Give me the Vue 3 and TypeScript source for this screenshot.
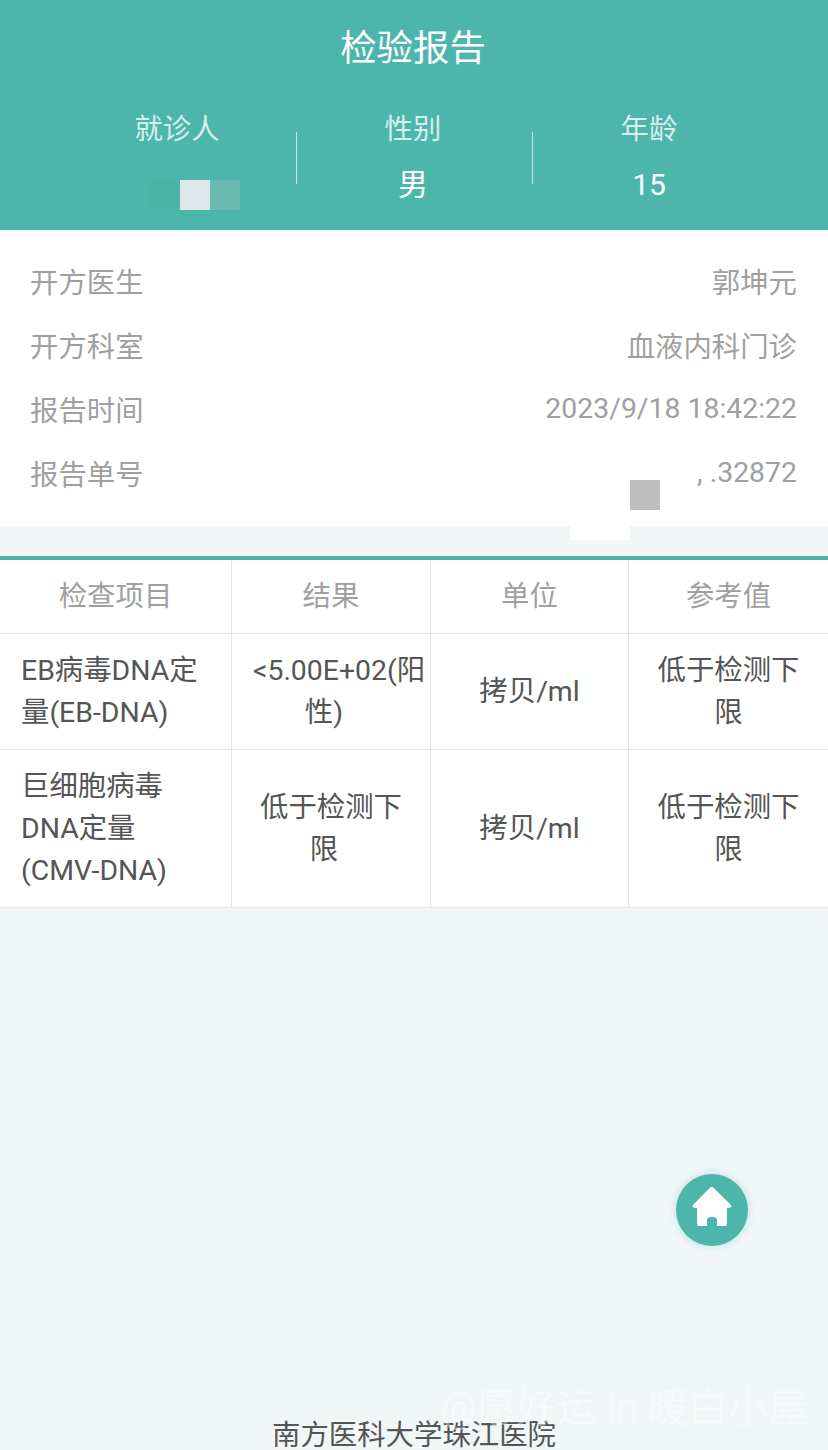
<script setup lang="ts">
interface Line { text: string; cls?: string }
interface Cell { lines: Line[]; cls?: string }
const patient = [
  { label: '就诊人', value: '' },
  { label: '性别', value: '男' },
  { label: '年龄', value: '15' },
]
const info = [
  { label: '开方医生', value: '郭坤元' },
  { label: '开方科室', value: '血液内科门诊' },
  { label: '报告时间', value: '2023/9/18 18:42:22' },
  { label: '报告单号', value: ', .32872' },
]
const heads = ['检查项目', '结果', '单位', '参考值']
const limit: Cell = { lines: [{ text: '低于检测下' }, { text: '限' }] }
const rows: Cell[][] = [
  [
    { cls: 'name', lines: [{ text: 'EB病毒DNA定' }, { text: '量(EB-DNA)' }] },
    { lines: [{ text: '<5.00E+02(阳', cls: 'start' }, { text: '性)', cls: 'shift' }] },
    { lines: [{ text: '拷贝/ml' }] },
    limit,
  ],
  [
    { cls: 'name', lines: [{ text: '巨细胞病毒' }, { text: 'DNA定量' }, { text: '(CMV-DNA)' }] },
    { lines: [{ text: '低于检测下' }, { text: '限', cls: 'shift' }] },
    { lines: [{ text: '拷贝/ml' }] },
    limit,
  ],
]
</script>

<template>
  <div class="page">
    <header class="hero">
      <h1 class="title">检验报告</h1>
      <div class="patient">
        <div v-for="p in patient" :key="p.label" class="pcol">
          <div class="plabel">{{ p.label }}</div>
          <div class="pvalue">{{ p.value || '\u00a0' }}</div>
        </div>
      </div>
    </header>

    <section class="info">
      <div v-for="r in info" :key="r.label" class="irow">
        <span>{{ r.label }}</span>
        <span>{{ r.value }}</span>
      </div>
    </section>

    <section class="table">
      <div v-for="h in heads" :key="h" class="cell head">{{ h }}</div>
      <template v-for="(row, i) in rows" :key="i">
        <div v-for="(c, j) in row" :key="j" class="cell body" :class="c.cls">
          <span v-for="l in c.lines" :key="l.text" class="line" :class="l.cls">{{ l.text }}</span>
        </div>
      </template>
    </section>

    <footer class="foot">南方医科大学珠江医院</footer>

    <div class="mask m1"></div>
    <div class="mask m2"></div>
    <div class="mask m3"></div>
    <div class="mask m4"></div>
    <div class="mask m5"></div>

    <button class="home" aria-label="首页">
      <svg width="72" height="72" viewBox="0 0 72 72">
        <path fill="#fff" d="M35.7 13 Q37 13 38 14.2 L55 31 Q56.2 33.5 53.5 33.8 L51 34 V50 Q51 52 49 52 H41 V46 Q41 43 36 43 Q31 43 31 46 V52 H23 Q21 52 21 50 V34 L18.2 33.8 Q15.6 33.3 17 31 L33.4 14.2 Q34.5 13 35.7 13 Z" />
      </svg>
    </button>

    <div class="watermark">@愿好运 in 暖白小屋</div>
  </div>
</template>

<style>
html, body { margin: 0; background: #f1f7f7; }
</style>

<style scoped>
.page {
  position: relative;
  height: 1450px;
  overflow: hidden;
  display: flex;
  flex-direction: column;
  background: #f1f7f7;
  font-family: Roboto, "Noto Sans CJK SC", sans-serif;
  font-size: 28.4px;
}
.hero {
  height: 230px;
  background: #4db6ac;
  color: #fff;
  box-sizing: border-box;
  padding-top: 24px;
}
.title {
  margin: 0;
  font-size: 36.4px;
  font-weight: 400;
  line-height: 50px;
  text-align: center;
  position: relative;
  left: -1px;
}
.patient {
  display: grid;
  grid-template-columns: 236px 236px 236px;
  margin: 36px 60px 0 59px;
}
.pcol { text-align: center; position: relative; height: 90px; }
.pcol + .pcol::before {
  content: "";
  position: absolute;
  left: 1px;
  top: 22px;
  width: 1px;
  height: 52px;
  background: rgba(255, 255, 255, 0.7);
}
.plabel { line-height: 40px; color: rgba(255, 255, 255, 0.78); }
.pvalue { line-height: 40px; margin-top: 15px; font-size: 30px; }
.info {
  height: 296px;
  box-sizing: border-box;
  padding: 18px 31px 22px 30px;
  background: #fff;
  color: #a0a0a0;
}
.irow {
  height: 64px;
  display: flex;
  justify-content: space-between;
  align-items: center;
}
.table {
  margin-top: 30px;
  border-top: 4px solid #4db6ac;
  background: #fff;
  display: grid;
  grid-template-columns: 232px 199px 198px 199px;
  grid-template-rows: 74px 116px 158px;
  color: #555;
}
.cell {
  box-sizing: border-box;
  border-right: 1px solid #e4e4e4;
  border-bottom: 1px solid #e4e4e4;
  display: flex;
  flex-direction: column;
  justify-content: center;
  align-items: stretch;
  text-align: center;
  overflow: hidden;
  line-height: 42px;
}
.cell:nth-child(4n) { border-right: 0; }
.head { color: #a0a0a0; padding-top: 1px; }
.line { display: block; white-space: nowrap; }
.name { text-align: left; padding-left: 21px; }
.start { text-align: left; padding-left: 21px; }
.shift { padding-right: 14px; }
.foot {
  margin-top: auto;
  text-align: center;
  color: #555;
  line-height: 28px;
}
.mask { position: absolute; }
.m1 { left: 150px; top: 180px; width: 30px; height: 30px; background: #4ab4a6; }
.m2 { left: 180px; top: 180px; width: 30px; height: 30px; background: #dde8ea; }
.m3 { left: 210px; top: 180px; width: 30px; height: 30px; background: #6bbab1; }
.m4 { left: 630px; top: 480px; width: 30px; height: 30px; background: #bebebe; }
.m5 { left: 570px; top: 510px; width: 60px; height: 30px; background: #fff; }
.home {
  position: absolute;
  left: 676px;
  top: 1174px;
  width: 72px;
  height: 72px;
  padding: 0;
  border: 0;
  border-radius: 50%;
  background: #4db6ac;
  box-shadow: 0 0 10px rgba(77, 182, 172, 0.35);
}
.home svg { display: block; }
.watermark {
  position: absolute;
  right: 20px;
  top: 1385px;
  font-size: 40px;
  line-height: 48px;
  color: rgba(255, 255, 255, 0.4);
  white-space: nowrap;
}
</style>
